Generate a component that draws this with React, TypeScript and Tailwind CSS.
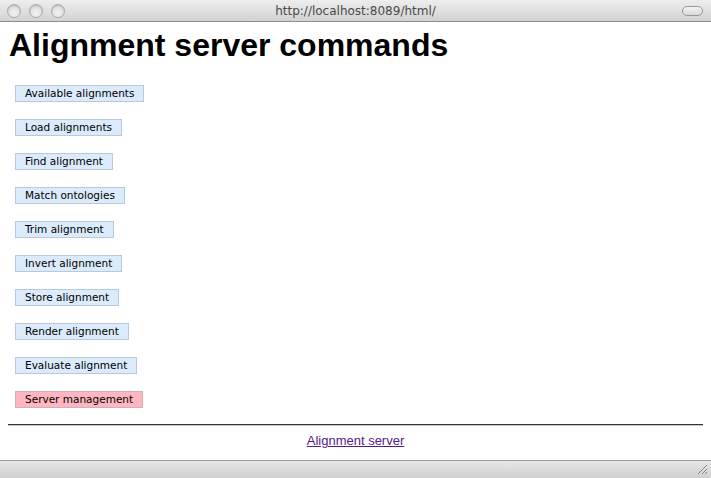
import React from "react";

const items = [
  "Available alignments",
  "Load alignments",
  "Find alignment",
  "Match ontologies",
  "Trim alignment",
  "Invert alignment",
  "Store alignment",
  "Render alignment",
  "Evaluate alignment",
];

function Light() {
  return (
    <div className="w-[14px] h-[14px] rounded-full border border-[#a8a8a8] bg-[radial-gradient(circle_at_50%_70%,#f4f4f4,#d2d2d2)] shadow-[inset_0_1px_1px_rgba(0,0,0,0.15)]" />
  );
}

export default function App() {
  return (
    <div className="w-[711px] h-[478px] flex flex-col bg-white overflow-hidden" style={{ fontFamily: "'DejaVu Sans', sans-serif" }}>
      <div className="h-[22px] shrink-0 relative flex items-center border-b border-[#8e8e8e] bg-gradient-to-b from-[#eeeeee] to-[#d2d2d2]">
        <div className="flex gap-[8px] pl-[7px]">
          <Light />
          <Light />
          <Light />
        </div>
        <div className="absolute inset-0 flex items-center justify-center text-[12px] text-[#4a4a4a]" style={{ fontFamily: "'DejaVu Sans', sans-serif" }}>
          http://localhost:8089/html/
        </div>
        <div className="ml-auto mr-[8px] w-[21px] h-[10px] rounded-full border border-[#999] bg-gradient-to-b from-[#f4f4f4] to-[#d8d8d8]" />
      </div>
      <div className="flex-1 flex flex-col px-[8px]">
        <h1 className="text-[32px] font-bold leading-[37px] text-black mt-[5px] ml-[1px]" style={{ fontFamily: "'Liberation Sans', Arial, sans-serif" }}>
          Alignment server commands
        </h1>
        <div className="flex flex-col gap-[17px] mt-[21px] ml-[7px]">
          {items.map((t) => (
            <div key={t} className="self-start h-[17px] px-[9px] flex items-center border border-[#b7c9dc] bg-[#dcebfb] text-[10.5px] text-black">
              {t}
            </div>
          ))}
          <div className="self-start h-[17px] px-[9px] flex items-center border border-[#c9b3b8] bg-[#ffb6c1] text-[10.5px] text-black">
            Server management
          </div>
        </div>
        <div className="mt-[16px] border-t border-[#333] border-b border-b-[#c8c8c8]" />
        <div className="text-center mt-[2px]" style={{ fontFamily: "'Liberation Sans', Arial, sans-serif" }}>
          <a href="#" className="text-[13px] text-[#551a8b] underline">Alignment server</a>
        </div>
      </div>
      <div className="h-[18px] shrink-0 relative border-t border-[#9a9a9a] bg-gradient-to-b from-[#e6e6e6] to-[#d0d0d0]">
        <svg className="absolute right-[3px] bottom-[3px]" width="11" height="11" viewBox="0 0 11 11">
          <path d="M1 10 L10 1 M5 10 L10 5 M8 10 L10 8" stroke="#888" strokeWidth="1" />
        </svg>
      </div>
    </div>
  );
}
